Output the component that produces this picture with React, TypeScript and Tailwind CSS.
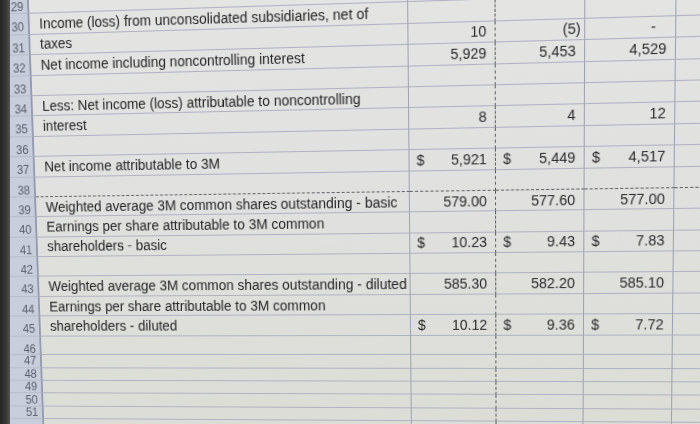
import React from "react";
import clsx from "clsx";

type Row = {
  n: number;
  kind?: "std" | "mid" | "small";
  a?: string;
  b?: string;
  c?: string;
  d?: string;
  usd?: boolean;
  dash?: boolean;
  hideLabel?: boolean;
};

const rows: Row[] = [
  { n: 29 },
  { n: 30, a: "Income (loss) from unconsolidated subsidiaries, net of" },
  { n: 31, a: "taxes", b: "10", c: "(5)", d: "-" },
  { n: 32, a: "Net income including noncontrolling interest", b: "5,929", c: "5,453", d: "4,529" },
  { n: 33 },
  { n: 34, a: "Less: Net income (loss) attributable to noncontrolling" },
  { n: 35, a: "interest", b: "8", c: "4", d: "12" },
  { n: 36 },
  { n: 37, a: "Net income attributable to 3M", b: "5,921", c: "5,449", d: "4,517", usd: true },
  { n: 38, dash: true },
  { n: 39, a: "Weighted average 3M common shares outstanding - basic", b: "579.00", c: "577.60", d: "577.00" },
  { n: 40, a: "Earnings per share attributable to 3M common" },
  { n: 41, a: "shareholders - basic", b: "10.23", c: "9.43", d: "7.83", usd: true },
  { n: 42 },
  { n: 43, a: "Weighted average 3M common shares outstanding - diluted", b: "585.30", c: "582.20", d: "585.10" },
  { n: 44, a: "Earnings per share attributable to 3M common" },
  { n: 45, a: "shareholders - diluted", b: "10.12", c: "9.36", d: "7.72", usd: true },
  { n: 46, kind: "mid" },
  { n: 47, kind: "small" },
  { n: 48, kind: "small" },
  { n: 49, kind: "small" },
  { n: 50, kind: "small" },
  { n: 51, kind: "small" },
  { n: 52, kind: "small", hideLabel: true },
  { n: 53, kind: "small", hideLabel: true },
  { n: 54, kind: "small", hideLabel: true },
  { n: 55, kind: "small", hideLabel: true },
];

function Val({ v }: { v?: string }) {
  if (!v) return <span />;
  if (v === "(5)")
    return (
      <span>
        (5<span className="inline-block mr-[-5px]">)</span>
      </span>
    );
  if (v === "-") return <span className="mr-[10px]">-</span>;
  return <span>{v}</span>;
}

function NumCell({
  v,
  usd,
  width,
  dashedRight,
  dashedBottom,
}: {
  v?: string;
  usd?: boolean;
  width: string;
  dashedRight?: boolean;
  dashedBottom?: boolean;
}) {
  return (
    <div
      className={clsx(
        "shrink-0 flex items-center justify-between pl-[7px] pr-[8px] border-r border-b text-[14px] leading-[16px] text-[#2a2a2c]",
        width,
        dashedRight ? "[border-right-style:dashed] border-r-[#58595f]" : "border-r-[#9ca1b5]",
        dashedBottom ? "[border-bottom-style:dashed] border-b-[#5e5f66]" : "border-b-[#aeb2c3]"
      )}
    >
      <span>{usd ? "$" : ""}</span>
      <Val v={v} />
    </div>
  );
}

export default function App() {
  return (
    <div className="w-[700px] h-[424px] flex overflow-hidden bg-[#dfe0dc] [font-family:'Liberation_Sans',Arial,sans-serif]">
      <div className="w-[10px] shrink-0 bg-[linear-gradient(90deg,#242424_0%,#383837_60%,#52525a_100%)]" />
      <div className="flex-1 overflow-hidden bg-[#c8cedc]">
        <div className="ml-[-40px] mt-[-11.3px] w-[800px] origin-[440px_341px] [transform:perspective(1000px)_rotateX(-4.3deg)_rotateY(-5deg)_rotate(-0.5deg)] bg-[linear-gradient(180deg,#e4e4e3_0%,#e0e1de_45%,#dadcd4_100%)]">
          {rows.map((r) => {
            const h =
              r.kind === "small" ? "h-[13.4px]" : r.kind === "mid" ? "h-[19.6px]" : "h-[20.4px]";
            const small = r.kind === "small";
            return (
              <div key={r.n} className={clsx("flex", h)}>
                <div
                  className={clsx(
                    "w-[57px] shrink-0 flex justify-end pr-[4px] bg-[#c8cedc] border-r-2 border-r-[#959bb0] border-b border-b-[#b7bccb] text-[12px] text-[#5c606e]",
                    small ? "items-center leading-none" : "items-start pt-[6px] leading-[14px]"
                  )}
                >
                  {r.hideLabel ? "" : r.n}
                </div>
                <div
                  className={clsx(
                    "w-[384px] shrink-0 flex items-center pl-[10px] border-r border-r-[#9ca1b5] border-b text-[14px] leading-[16px] text-[#252527] whitespace-nowrap",
                    r.dash ? "[border-bottom-style:dashed] border-b-[#5e5f66]" : "border-b-[#aeb2c3]"
                  )}
                >
                  {r.a ?? ""}
                </div>
                <NumCell v={r.b} usd={r.usd} width="w-[85px]" dashedRight dashedBottom={r.dash} />
                <NumCell v={r.c} usd={r.usd} width="w-[86px]" dashedBottom={r.dash} />
                <NumCell v={r.d} usd={r.usd} width="w-[86px]" dashedBottom={r.dash} />
                <NumCell width="w-[102px]" dashedBottom={r.dash} />
              </div>
            );
          })}
        </div>
      </div>
    </div>
  );
}
